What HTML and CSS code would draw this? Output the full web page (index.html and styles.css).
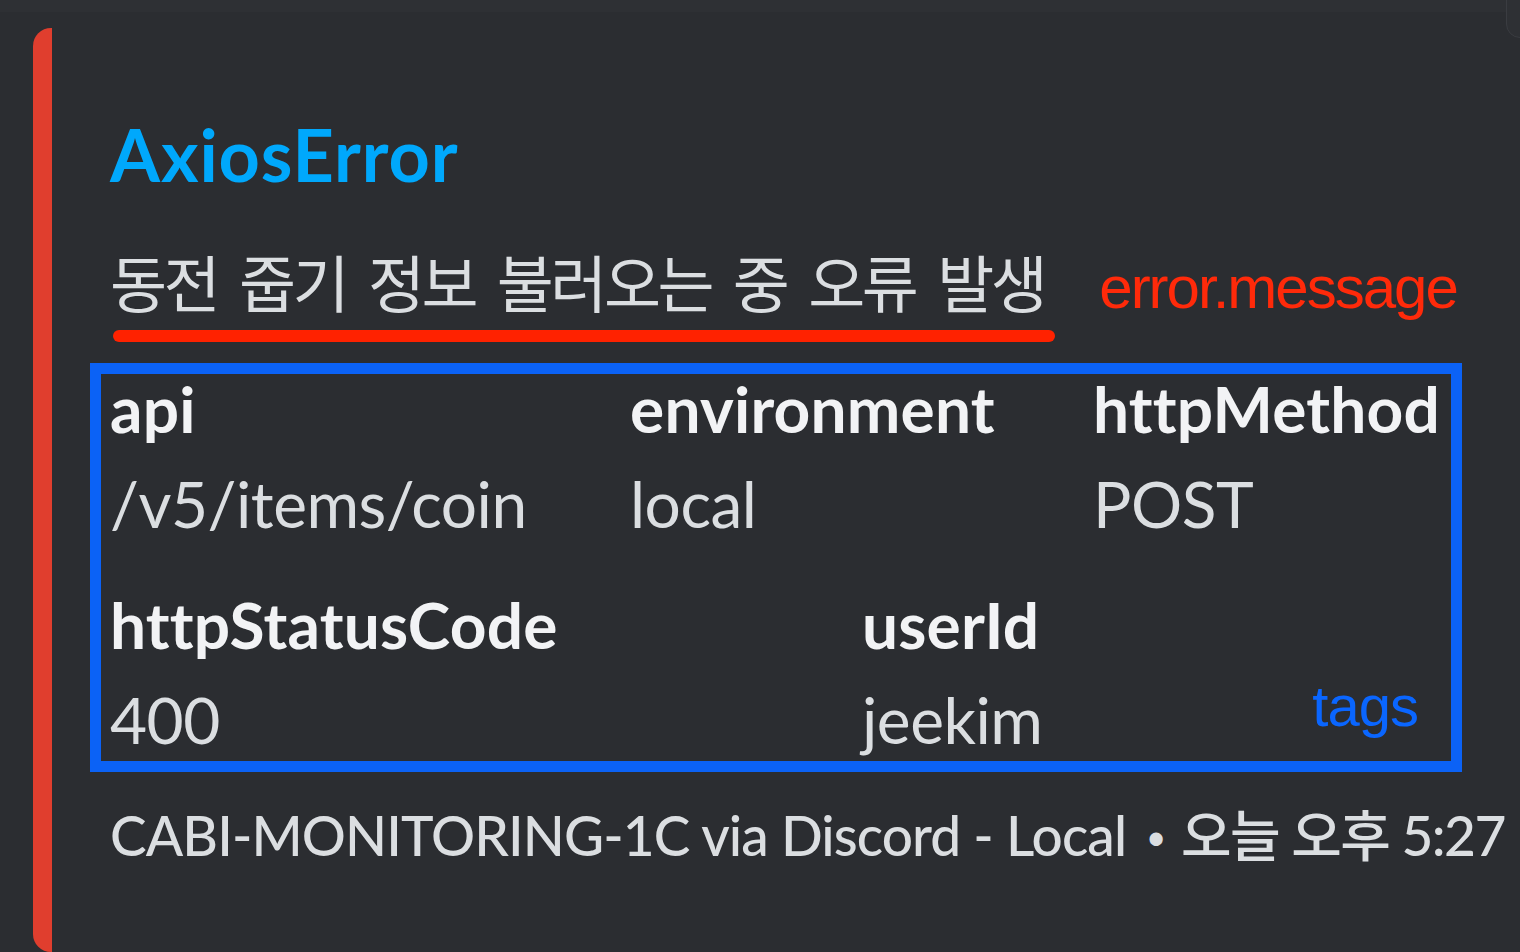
FILE: index.html
```html
<!DOCTYPE html>
<html lang="ko">
<head>
<meta charset="utf-8">
<title>AxiosError embed</title>
<link rel="stylesheet" href="styles.css">
</head>
<body>
<div class="topstrip"></div>
<div class="toolbar-edge"></div>
<div class="embed">
  <div class="title">AxiosError</div>
  <div class="desc-row">
    <div class="desc">동전 줍기 정보 불러오는 중 오류 발생</div>
    <div class="note-red">error.message</div>
  </div>
  <div class="underline"></div>
  <div class="fields">
    <div class="row row1">
      <div class="field">
        <div class="fname">api</div>
        <div class="fvalue">/v5/items/coin</div>
      </div>
      <div class="field">
        <div class="fname">environment</div>
        <div class="fvalue">local</div>
      </div>
      <div class="field">
        <div class="fname">httpMethod</div>
        <div class="fvalue">POST</div>
      </div>
    </div>
    <div class="row row2">
      <div class="field">
        <div class="fname">httpStatusCode</div>
        <div class="fvalue">400</div>
      </div>
      <div class="field">
        <div class="fname">userId</div>
        <div class="fvalue">jeekim</div>
      </div>
      <div class="note-blue">tags</div>
    </div>
  </div>
  <div class="footer">CABI-MONITORING-1C via Discord - Local<span class="dot">•</span><span class="ko">오늘 오후 5:27</span></div>
</div>
</body>
</html>
```

FILE: styles.css
```css
html, body {
  margin: 0;
  padding: 0;
}
body {
  background: #2b2d31;
  width: 1520px;
  height: 952px;
  overflow: hidden;
  position: relative;
  font-family: Lato, "Noto Sans CJK KR", sans-serif;
}
.topstrip {
  height: 12px;
  background: #2e3034;
}
.toolbar-edge {
  position: absolute;
  left: 1506px;
  top: -20px;
  width: 40px;
  height: 56px;
  border: 1px solid #3a3c41;
  border-radius: 14px;
  background: #2e3034;
}
.embed {
  margin: 16px 0 0 33px;
  border-left: 19px solid #e03e2e;
  border-radius: 18px 0 0 18px;
  padding: 83px 0 80px 58px;
}
.title {
  font-family: Lato, sans-serif;
  font-weight: 700;
  font-size: 72px;
  line-height: 86px;
  color: #00a8fc;
  letter-spacing: 0.9px;
}
.desc-row {
  margin-top: 44px;
  display: flex;
  align-items: baseline;
}
.desc {
  font-family: "Noto Sans CJK KR", sans-serif;
  font-size: 62px;
  line-height: 80px;
  letter-spacing: -3.5px;
  word-spacing: 8px;
  color: #dbdee1;
}
.note-red {
  margin-left: 55px;
  font-family: "Liberation Sans", Arial, sans-serif;
  font-size: 60px;
  letter-spacing: -2px;
  color: #ff2a0a;
}
.underline {
  margin: 8px 0 0 3px;
  width: 942px;
  height: 12px;
  border-radius: 6px;
  background: #ff2200;
}
.fields {
  margin: 21px 0 0 -20px;
  width: 1341px;
  border: 11px solid #0b62f6;
  padding: 0 0 6px 9px;
  display: flex;
  flex-direction: column;
  gap: 51px;
}
.row {
  display: grid;
}
.row1 {
  grid-template-columns: 520px 463px 1fr;
}
.row2 {
  grid-template-columns: 752px 1fr auto;
}
.fname {
  font-weight: 700;
  font-size: 64px;
  line-height: 70px;
  color: #f2f3f5;
  letter-spacing: 0.2px;
}
.fvalue {
  margin-top: 25px;
  font-weight: 400;
  font-size: 64px;
  line-height: 70px;
  color: #dbdee1;
  letter-spacing: -0.5px;
}
.note-blue {
  align-self: end;
  margin: 0 33px 19px 0;
  font-family: "Liberation Sans", Arial, sans-serif;
  font-size: 58px;
  line-height: 60px;
  letter-spacing: -1px;
  color: #0a66ff;
}
.footer {
  margin-top: 28px;
  font-weight: 500;
  font-size: 55px;
  line-height: 70px;
  letter-spacing: -0.9px;
  color: #dbdee1;
  white-space: nowrap;
}
.dot {
  display: inline-block;
  font-size: 34px;
  margin: 0 16px 0 20px;
  vertical-align: 6px;
}
.ko {
  letter-spacing: -1.6px;
}
```
